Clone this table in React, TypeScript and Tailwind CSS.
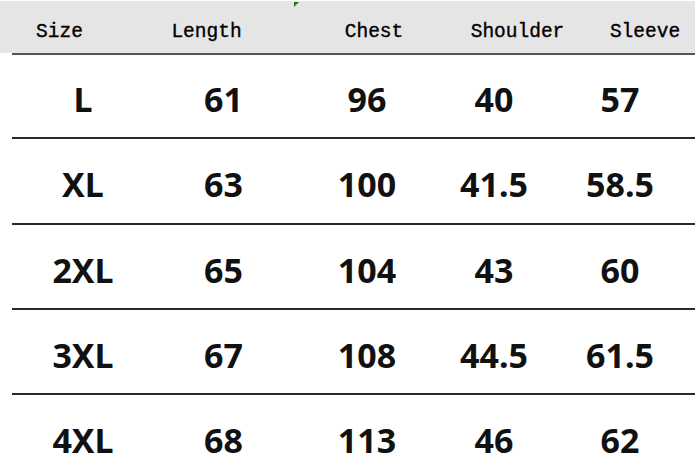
import React from "react";

const rows = [
  { h: "h-[84px]", cells: ["L", "61", "96", "40", "57"] },
  { h: "h-[86px]", cells: ["XL", "63", "100", "41.5", "58.5"] },
  { h: "h-[85px]", cells: ["2XL", "65", "104", "43", "60"] },
  { h: "h-[85px]", cells: ["3XL", "67", "108", "44.5", "61.5"] },
  { h: "h-[85px]", cells: ["4XL", "68", "113", "46", "62"] },
];

const headers = ["Size", "Length", "Chest", "Shoulder", "Sleeve"];

export default function App() {
  return (
    <div className="w-[695px] h-[470px] overflow-hidden bg-white relative">
      <div className="h-px bg-white" />
      <div className="relative bg-[#e6e5e6] h-[52px]">
        <div
          className="grid grid-cols-[119px_175px_160px_127px_128px] h-full items-center pt-[12px] text-[19.5px] text-black [-webkit-text-stroke:0.35px_black]"
          style={{ fontFamily: '"Liberation Mono", "DejaVu Sans Mono", monospace' }}
        >
          {headers.map((t) => (
            <div key={t} className="text-center whitespace-nowrap">
              {t}
            </div>
          ))}
        </div>
        <div className="absolute left-[294px] top-[1px] w-0 h-0 border-t-[5px] border-t-[#1a7a1a] border-r-[5px] border-r-transparent" />
      </div>
      <div className="ml-[12px] h-[2px] bg-[#555]" />
      <div style={{ fontFamily: '"Noto Sans", "Open Sans", sans-serif' }}>
        {rows.map((r, i) => (
          <div key={i} className={`${r.h} flex flex-col`}>
            <div className="flex-1 grid grid-cols-[166px_115px_172px_82px_170px] items-center pt-[6px] text-[34px] font-bold text-[#111] leading-none">
              {r.cells.map((c, j) => (
                <div key={j} className="text-center whitespace-nowrap">
                  {c}
                </div>
              ))}
            </div>
            <div className="ml-[12px] h-[2px] bg-[#2a2a2a]" />
          </div>
        ))}
      </div>
    </div>
  );
}
